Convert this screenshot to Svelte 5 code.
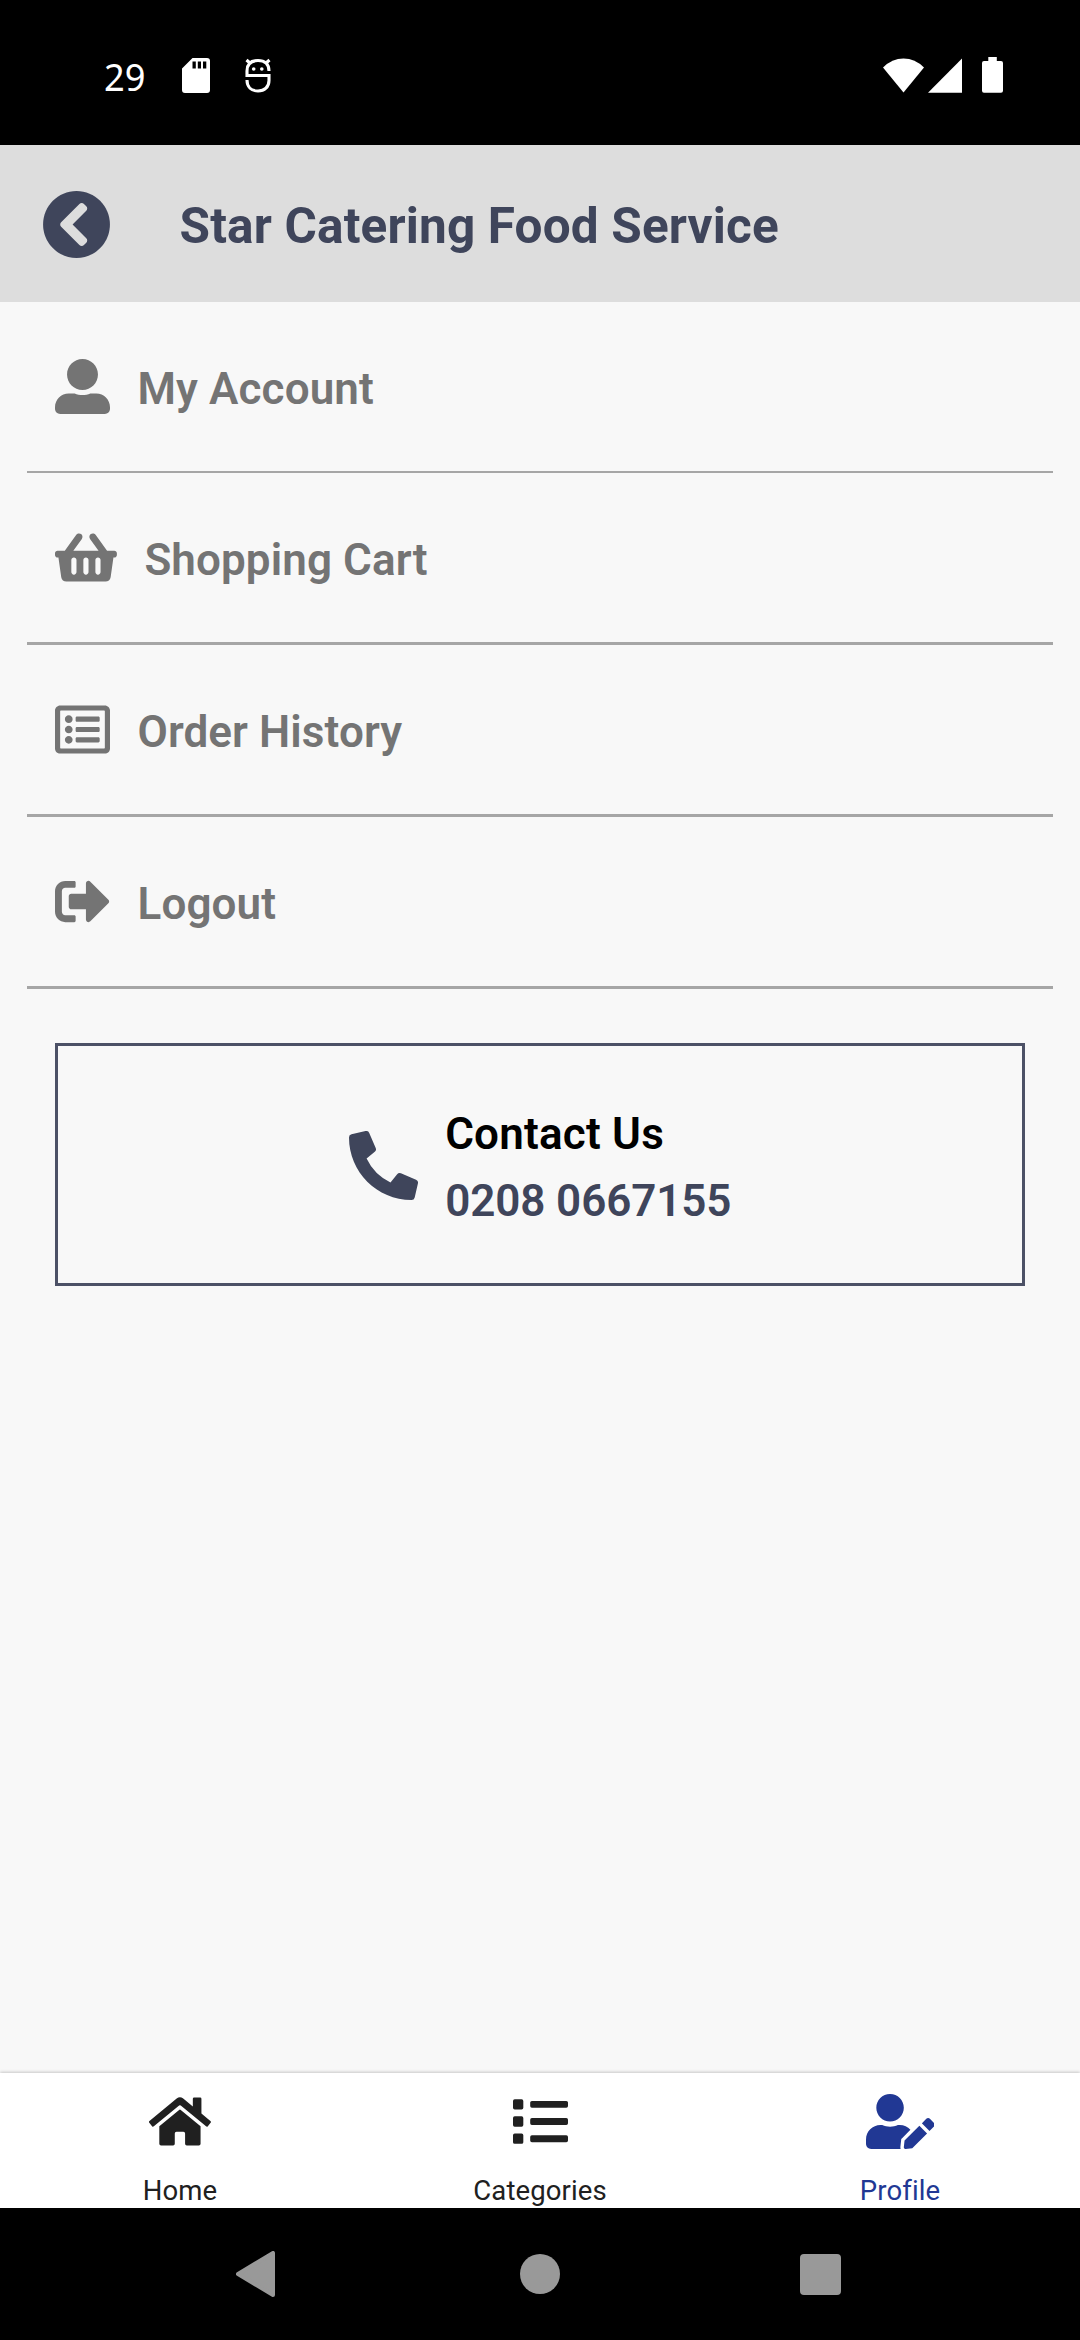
<script>
  const menu = [
    {
      label: 'My Account',
      width: 512,
      path: 'M256 288c79.5 0 144-64.5 144-144S335.5 0 256 0 112 64.5 112 144s64.5 144 144 144zm128 32h-55.1c-22.2 10.2-46.9 16-72.9 16s-50.6-5.8-72.9-16H128C57.3 320 0 377.3 0 448v16c0 26.5 21.5 48 48 48h416c26.5 0 48-21.5 48-48v-16c0-70.7-57.3-128-128-128z'
    },
    {
      label: 'Shopping Cart',
      width: 576,
      path: 'M576 216v16c0 13.255-10.745 24-24 24h-8l-26.113 182.788C514.509 462.435 494.257 480 470.37 480H105.63c-23.887 0-44.139-17.565-47.518-41.212L32 256h-8c-13.255 0-24-10.745-24-24v-16c0-13.255 10.745-24 24-24h67.341l106.78-146.821c10.395-14.292 30.407-17.453 44.701-7.058 14.293 10.395 17.453 30.408 7.058 44.701L170.477 192h235.046L326.12 82.821c-10.395-14.292-7.234-34.306 7.059-44.701 14.291-10.395 34.306-7.235 44.701 7.058L484.659 192H552c13.255 0 24 10.745 24 24zM312 392V280c0-13.255-10.745-24-24-24s-24 10.745-24 24v112c0 13.255 10.745 24 24 24s24-10.745 24-24zm112 0V280c0-13.255-10.745-24-24-24s-24 10.745-24 24v112c0 13.255 10.745 24 24 24s24-10.745 24-24zm-224 0V280c0-13.255-10.745-24-24-24s-24 10.745-24 24v112c0 13.255 10.745 24 24 24s24-10.745 24-24z'
    },
    {
      label: 'Order History',
      width: 512,
      path: 'M464 32H48C21.49 32 0 53.49 0 80v352c0 26.51 21.49 48 48 48h416c26.51 0 48-21.49 48-48V80c0-26.51-21.49-48-48-48zm-6 400H54a6 6 0 0 1-6-6V86a6 6 0 0 1 6-6h404a6 6 0 0 1 6 6v340a6 6 0 0 1-6 6zm-42-92v24c0 6.627-5.373 12-12 12H204c-6.627 0-12-5.373-12-12v-24c0-6.627 5.373-12 12-12h200c6.627 0 12 5.373 12 12zm0-96v24c0 6.627-5.373 12-12 12H204c-6.627 0-12-5.373-12-12v-24c0-6.627 5.373-12 12-12h200c6.627 0 12 5.373 12 12zm0-96v24c0 6.627-5.373 12-12 12H204c-6.627 0-12-5.373-12-12v-24c0-6.627 5.373-12 12-12h200c6.627 0 12 5.373 12 12zm-252 12c0 19.882-16.118 36-36 36s-36-16.118-36-36 16.118-36 36-36 36 16.118 36 36zm0 96c0 19.882-16.118 36-36 36s-36-16.118-36-36 16.118-36 36-36 36 16.118 36 36zm0 96c0 19.882-16.118 36-36 36s-36-16.118-36-36 16.118-36 36-36 36 16.118 36 36z'
    },
    {
      label: 'Logout',
      width: 512,
      path: 'M497 273L329 441c-15 15-41 4.5-41-17v-96H152c-13.3 0-24-10.7-24-24v-96c0-13.3 10.7-24 24-24h136V88c0-21.4 25.9-32 41-17l168 168c9.3 9.4 9.3 24.6 0 34zM192 436v-40c0-6.6-5.4-12-12-12H96c-17.7 0-32-14.3-32-32V160c0-17.7 14.3-32 32-32h84c6.6 0 12-5.4 12-12V76c0-6.6-5.4-12-12-12H96c-53 0-96 43-96 96v192c0 53 43 96 96 96h84c6.6 0 12-5.4 12-12z'
    }
  ];

  const tabs = [
    {
      label: 'Home',
      width: 576,
      path: 'M280.37 148.26L96 300.11V464a16 16 0 0 0 16 16l112.06-.29a16 16 0 0 0 15.92-16V368a16 16 0 0 1 16-16h64a16 16 0 0 1 16 16v95.64a16 16 0 0 0 16 16.05L464 480a16 16 0 0 0 16-16V300L295.67 148.26a12.19 12.19 0 0 0-15.3 0zM571.6 251.47L488 182.56V44.05a12 12 0 0 0-12-12h-56a12 12 0 0 0-12 12v72.61L318.47 43a48 48 0 0 0-61 0L4.34 251.47a12 12 0 0 0-1.6 16.9l25.5 31A12 12 0 0 0 45.15 301l235.22-193.74a12.19 12.19 0 0 1 15.3 0L530.9 301a12 12 0 0 0 16.9-1.6l25.5-31a12 12 0 0 0-1.7-16.93z'
    },
    {
      label: 'Categories',
      width: 512,
      path: 'M80 368H16a16 16 0 0 0-16 16v64a16 16 0 0 0 16 16h64a16 16 0 0 0 16-16v-64a16 16 0 0 0-16-16zm0-320H16A16 16 0 0 0 0 64v64a16 16 0 0 0 16 16h64a16 16 0 0 0 16-16V64a16 16 0 0 0-16-16zm0 160H16a16 16 0 0 0-16 16v64a16 16 0 0 0 16 16h64a16 16 0 0 0 16-16v-64a16 16 0 0 0-16-16zm416 176H176a16 16 0 0 0-16 16v32a16 16 0 0 0 16 16h320a16 16 0 0 0 16-16v-32a16 16 0 0 0-16-16zm0-320H176a16 16 0 0 0-16 16v32a16 16 0 0 0 16 16h320a16 16 0 0 0 16-16V80a16 16 0 0 0-16-16zm0 160H176a16 16 0 0 0-16 16v32a16 16 0 0 0 16 16h320a16 16 0 0 0 16-16v-32a16 16 0 0 0-16-16z'
    },
    {
      label: 'Profile',
      width: 640,
      active: true,
      path: 'M224 256c70.7 0 128-57.3 128-128S294.7 0 224 0 96 57.3 96 128s57.3 128 128 128zm89.6 32h-16.7c-22.2 10.2-46.9 16-72.9 16s-50.6-5.8-72.9-16h-16.7C60.2 288 0 348.2 0 422.4V464c0 26.5 21.5 48 48 48h274.9c-2.4-6.8-3.4-14-2.6-21.3l6.8-60.9 1.2-11.1 7.9-7.9 77.3-77.3c-24.5-27.7-60-45.5-99.9-45.5zm45.3 145.3l-6.8 61c-1.1 10.2 7.5 18.8 17.6 17.6l60.9-6.8 137.9-137.9-71.7-71.7-137.9 137.8zM633 268.9L595.1 231c-9.3-9.3-24.5-9.3-33.8 0l-37.8 37.8-4.1 4.1 71.8 71.7 41.8-41.8c9.3-9.4 9.3-24.5 0-33.9z'
    }
  ];
</script>

<div class="screen">
  <div class="status">
    <div class="notifications">
      <span class="clock">29</span>
      <svg class="sd" viewBox="0 0 28 35" width="28" height="35">
        <path fill="#fff" fill-rule="evenodd" d="M10.500 0H25a3 3 0 0 1 3 3v29a3 3 0 0 1-3 3H3a3 3 0 0 1-3-3V10.500zM10.500 3.500v7h3.300v-7zM15.800 3.500v7h3.200v-7zM21 3.500v7h3.300v-7z" />
      </svg>
      <svg class="debug" viewBox="0 0 26 35" width="26" height="35">
        <g fill="none" stroke="#fff" stroke-width="3.1">
          <path d="M24 13C24 6 20 2.500 13 2.500S2 6 2 13v4.500h22v5c0 6.500-4.500 10.500-11 10.500S2 29 2 22" />
          <path d="M1.500 2l4 3.500M24.500 2l-4 3.500" />
        </g>
        <circle cx="8.700" cy="11" r="1.800" fill="#fff" />
        <circle cx="16.800" cy="11" r="1.800" fill="#fff" />
      </svg>
    </div>
    <div class="signals">
      <svg viewBox="0 0 41 35" width="41" height="35">
        <path fill="#fff" d="M0 9.500Q9 .5 20.500 .5T41 9.500L20.500 34.500z" />
      </svg>
      <svg class="cell" viewBox="0 0 34 35" width="34" height="35">
        <path fill="#fff" d="M34 .5v34.200H0z" />
      </svg>
      <svg class="battery" viewBox="0 0 21 36" width="21" height="36">
        <path fill="#fff" d="M6.300 0h8.500v4H19a2 2 0 0 1 2 2v27.700a2 2 0 0 1-2 2H2a2 2 0 0 1-2-2V6a2 2 0 0 1 2-2h4.300z" />
      </svg>
    </div>
  </div>

  <header>
    <svg class="back" viewBox="0 0 512 512">
      <path d="M256 504C119 504 8 393 8 256S119 8 256 8s248 111 248 248-111 248-248 248z" fill="#3f455b" />
      <path d="M142.100 273l135.500 135.500c9.400 9.400 24.600 9.400 33.900 0l17-17c9.400-9.400 9.400-24.600 0-33.900L226.900 256l101.600-101.600c9.400-9.400 9.400-24.600 0-33.900l-17-17c-9.400-9.400-24.600-9.400-33.900 0L142.100 239c-9.400 9.400-9.400 24.600 0 34z" fill="#ddd" />
    </svg>
    <h1>Star Catering Food Service</h1>
  </header>

  <main>
    <ul>
      {#each menu as item}
        <li>
          <svg class="icon" viewBox="0 0 {item.width} 512" width={(item.width * 55) / 512} height="55">
            <path d={item.path} />
          </svg>
          <span>{item.label}</span>
        </li>
      {/each}
    </ul>

    <section class="contact">
      <svg class="phone" viewBox="0 0 512 512">
        <path d="M497.390 361.800l-112-48a24 24 0 0 0-28 6.900l-49.600 60.600A370.660 370.660 0 0 1 130.600 204.110l60.600-49.600a23.940 23.940 0 0 0 6.900-28l-48-112A24.160 24.160 0 0 0 122.600.61l-104 24A24 24 0 0 0 0 48c0 256.500 207.900 464 464 464a24 24 0 0 0 23.400-18.600l24-104a24.290 24.290 0 0 0-14.010-27.600z" />
      </svg>
      <div class="lines">
        <div class="title">Contact Us</div>
        <div class="number">0208 0667155</div>
      </div>
    </section>
  </main>

  <nav class="tabs">
    {#each tabs as tab}
      <div class="tab" class:active={tab.active}>
        <svg class="icon" viewBox="0 0 {tab.width} 512" width={(tab.width * 55) / 512} height="55">
          <path d={tab.path} />
        </svg>
        <span>{tab.label}</span>
      </div>
    {/each}
  </nav>

  <div class="system">
    <svg viewBox="0 0 40 46" width="40" height="46">
      <path d="M2 23L37 2v42z" fill="#999" stroke="#999" stroke-width="4" stroke-linejoin="round" />
    </svg>
    <svg class="home-button" viewBox="0 0 40 40" width="40" height="40">
      <circle cx="20" cy="20" r="20" fill="#999" />
    </svg>
    <svg viewBox="0 0 41 41" width="41" height="41"><rect width="41" height="41" rx="4" fill="#999" /></svg>
  </div>
</div>

<style>
  :global(body) {
    margin: 0;
    background: #000;
  }
  .screen {
    width: 1080px;
    height: 2340px;
    display: flex;
    flex-direction: column;
    overflow: hidden;
    background: #f8f8f8;
    font-family: Roboto, sans-serif;
  }
  svg {
    display: block;
    flex: none;
  }
  .status {
    box-sizing: border-box;
    height: 145px;
    flex: none;
    display: flex;
    justify-content: space-between;
    padding: 56px 77px 0 104px;
    background: #000;
  }
  .notifications,
  .signals {
    display: flex;
    align-items: flex-start;
  }
  .clock {
    width: 78px;
    height: 36px;
    font: 39px/40px 'Noto Sans', sans-serif;
    color: #fff;
    transform: scaleX(0.93);
    transform-origin: left;
  }
  .sd {
    margin-top: 2px;
  }
  .debug {
    margin: 2px 0 0 35px;
  }
  .signals svg {
    margin-top: 2px;
  }
  .signals .cell {
    margin-left: 4px;
  }
  .signals .battery {
    margin: 1px 0 0 20px;
  }
  header {
    height: 157px;
    flex: none;
    display: flex;
    align-items: center;
    gap: 68.5px;
    padding-left: 42px;
    background: #ddd;
  }
  .back {
    width: 69px;
    height: 69px;
    margin-top: 1px;
  }
  h1 {
    margin: 4px 0 0;
    font-size: 49.5px;
    font-weight: 660;
    line-height: 58px;
    letter-spacing: 0.16px;
    color: #3f455b;
  }
  main {
    flex: 1;
    min-height: 0;
  }
  ul {
    margin: 0 27px;
    padding: 0;
    list-style: none;
  }
  li {
    box-sizing: border-box;
    height: 172px;
    display: flex;
    align-items: center;
    gap: 27.5px;
    padding-left: 28px;
    border-bottom: 3px solid #a6a6a6;
    font-size: 44px;
    font-weight: 600;
    letter-spacing: 0.1px;
    color: #747474;
  }
  li:first-child {
    height: 171px;
    border-bottom-width: 2px;
  }
  li span {
    padding-top: 4px;
  }
  .icon,
  .phone {
    fill: currentColor;
  }
  .contact {
    box-sizing: border-box;
    height: 243px;
    margin: 54px 55px 0;
    display: flex;
    align-items: center;
    justify-content: center;
    gap: 27.5px;
    border: 3px solid #4c5166;
    font-size: 44px;
    font-weight: 600;
    line-height: 67px;
    color: #3f455b;
  }
  .phone {
    width: 69px;
    height: 69px;
    margin-top: 2px;
  }
  .lines {
    padding-top: 6px;
  }
  .title {
    color: #000;
    letter-spacing: 0.2px;
  }
  .number {
    letter-spacing: -0.1px;
  }
  .tabs {
    height: 135px;
    flex: none;
    display: grid;
    grid-template-columns: repeat(3, 1fr);
    background: #fff;
    box-shadow: 0 -1px 3px rgba(0, 0, 0, 0.2);
  }
  .tab {
    display: flex;
    flex-direction: column;
    align-items: center;
    gap: 26px;
    padding-top: 21px;
    font-size: 27.5px;
    line-height: 32px;
    letter-spacing: 0.1px;
    color: #202020;
  }
  .tab.active {
    color: #213894;
  }
  .system {
    box-sizing: border-box;
    height: 132px;
    flex: none;
    position: relative;
    display: flex;
    align-items: center;
    justify-content: space-between;
    padding: 0 239px 0 236px;
    background: #000;
  }
  .home-button {
    margin-left: 4px;
  }
</style>
